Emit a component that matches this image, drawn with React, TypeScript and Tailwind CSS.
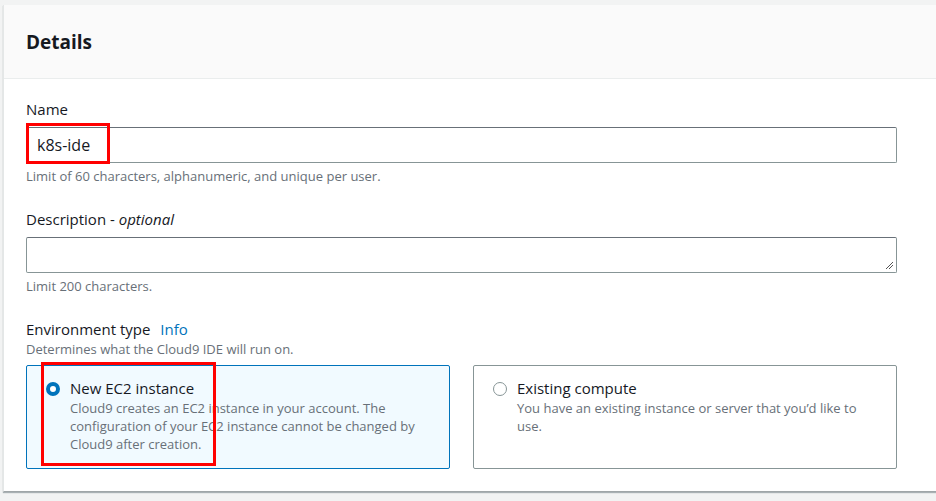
import React from "react";

export default function App() {
  const font = { fontFamily: '"Open Sans", "Noto Sans", Arial, sans-serif' };
  return (
    <div className="w-[936px] h-[501px] bg-[#f2f3f3] overflow-hidden pt-[5px] pl-[3px]" style={font}>
      <div className="w-[960px] h-[487px] bg-white border-l border-[#e4e7e7] shadow-[0_1px_1px_0_rgba(0,28,36,0.3)] border-b border-b-[#a0a6a8]">
        <div className="h-[74px] bg-[#fafafa] border-b border-[#eaeded] flex items-center pl-[22px]">
          <h2 className="text-[19px] font-bold text-[#16191f] leading-none mt-[1px]">Details</h2>
        </div>
        <div className="pl-[22px] pt-[19px] w-[893px]">
          {/* Name */}
          <div className="text-[15px] text-[#16191f] leading-[22px]">Name</div>
          <div className="relative mt-[7px]">
            <div className="h-[36px] border border-[#879596] border-t-[#687078] rounded-[2px] flex items-center pl-[10px] text-[16px] text-[#16191f]">
              k8s-ide
            </div>
            <div className="absolute left-0 top-[-4px] w-[84px] h-[41px] border-[3px] border-[#ff0000]" />
          </div>
          <div className="text-[13px] text-[#687078] mt-[4px] leading-[18px]">
            Limit of 60 characters, alphanumeric, and unique per user.
          </div>

          {/* Description */}
          <div className="text-[15px] text-[#16191f] leading-[22px] mt-[23px]">
            Description - <span className="italic">optional</span>
          </div>
          <div className="relative mt-[7px] h-[36px] border border-[#879596] border-t-[#687078] rounded-[2px]">
            <svg className="absolute right-[2px] bottom-[2px]" width="9" height="9" viewBox="0 0 9 9">
              <line x1="1" y1="8" x2="8" y2="1" stroke="#555" strokeWidth="1" />
              <line x1="4" y1="8" x2="8" y2="4" stroke="#555" strokeWidth="1" />
            </svg>
          </div>
          <div className="text-[13px] text-[#687078] mt-[4px] leading-[18px]">Limit 200 characters.</div>

          {/* Environment type */}
          <div className="text-[15px] text-[#16191f] leading-[22px] mt-[23px]">
            Environment type <span className="text-[#0073bb] ml-[6px]">Info</span>
          </div>
          <div className="text-[13px] text-[#687078] leading-[18px]">Determines what the Cloud9 IDE will run on.</div>

          <div className="grid grid-cols-2 gap-[23px] mt-[7px]">
            <div className="relative h-[104px] border border-[#0073bb] bg-[#f1faff] rounded-[2px] pl-[19px] pt-[12px] pr-[16px] flex gap-[10px]">
              <div className="mt-[4px] w-[14px] h-[14px] rounded-full border-[4px] border-[#0073bb] bg-white shrink-0" />
              <div>
                <div className="text-[15px] text-[#16191f] leading-[20px]">New EC2 instance</div>
                <div className="text-[13px] text-[#687078] leading-[18px] mt-[1px]">
                  Cloud9 creates an EC2 instance in your account. The configuration of your EC2 instance cannot be changed by Cloud9 after creation.
                </div>
              </div>
              <div className="absolute left-[14px] top-[-4px] w-[175px] h-[104px] border-[3px] border-[#ff0000]" />
            </div>
            <div className="h-[104px] border border-[#879596] bg-white rounded-[2px] pl-[19px] pt-[12px] pr-[16px] flex gap-[10px]">
              <div className="mt-[4px] w-[14px] h-[14px] rounded-full border border-[#879596] bg-white shrink-0" />
              <div>
                <div className="text-[15px] text-[#16191f] leading-[20px]">Existing compute</div>
                <div className="text-[13px] text-[#687078] leading-[18px] mt-[1px]">
                  You have an existing instance or server that you’d like to use.
                </div>
              </div>
            </div>
          </div>
        </div>
      </div>
    </div>
  );
}
